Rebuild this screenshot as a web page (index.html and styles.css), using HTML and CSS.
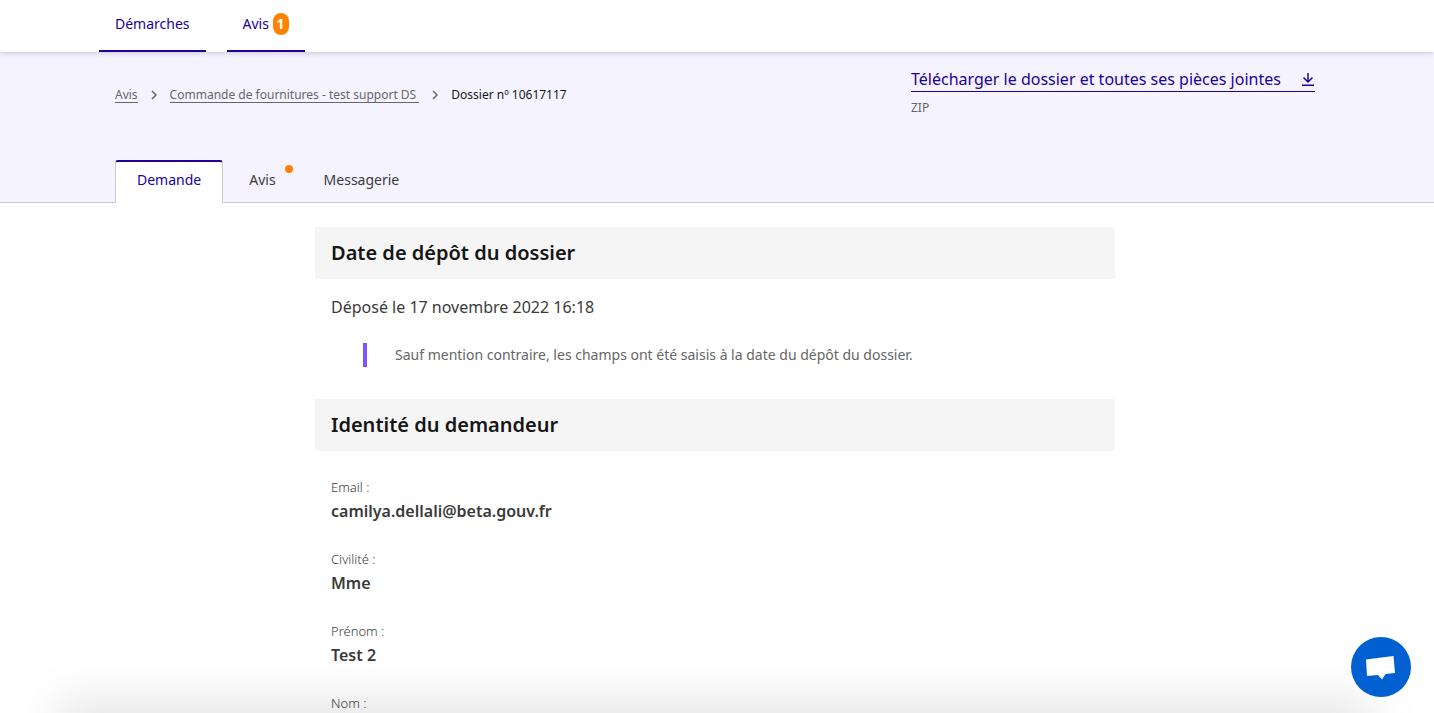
FILE: index.html
```html
<!DOCTYPE html>
<html lang="fr">
<head>
<meta charset="utf-8">
<meta name="viewport" content="width=device-width, initial-scale=1">
<title>Dossier nº 10617117</title>
<link rel="stylesheet" href="styles.css">
</head>
<body>
<header class="site-header">
  <nav class="container main-nav" aria-label="Menu principal">
    <a class="nav-link" href="#">Démarches</a>
    <a class="nav-link" href="#">Avis <span class="badge">1</span></a>
  </nav>
</header>

<div class="sub-header">
  <div class="container">
    <div class="sub-header-top">
      <nav aria-label="Fil d’Ariane">
        <ol class="breadcrumb">
          <li><a class="crumb-link" href="#">Avis</a></li>
          <li>
            <svg class="chevron" viewBox="0 0 16 16" aria-hidden="true"><path d="M6 4l4 4-4 4"/></svg>
            <a class="crumb-link" href="#">Commande de fournitures - test support DS&nbsp;</a>
          </li>
          <li>
            <svg class="chevron" viewBox="0 0 16 16" aria-hidden="true"><path d="M6 4l4 4-4 4"/></svg>
            <span class="crumb-current">Dossier nº 10617117</span>
          </li>
        </ol>
      </nav>
      <div class="download">
        <a class="download-link" href="#">Télécharger le dossier et toutes ses pièces jointes
          <svg class="download-icon" viewBox="0 0 16 16" aria-hidden="true"><path d="M9 1v9M4.500 5.500L9 10l4.500-4.500M3 13.250h12"/></svg>
        </a>
        <p class="download-detail">ZIP</p>
      </div>
    </div>
    <nav class="tabs" aria-label="Sections du dossier">
      <a class="tab tab-active" href="#" aria-current="page">Demande</a>
      <a class="tab" href="#">Avis<span class="tab-dot"></span></a>
      <a class="tab" href="#">Messagerie</a>
    </nav>
  </div>
</div>

<main class="dossier">
  <section>
    <h2 class="section-title">Date de dépôt du dossier</h2>
    <p class="deposit-date">Déposé le 17 novembre 2022 16:18</p>
    <p class="notice">Sauf mention contraire, les champs ont été saisis à la date du dépôt du dossier.</p>
  </section>
  <section>
    <h2 class="section-title">Identité du demandeur</h2>
    <dl class="fields">
      <div class="field"><dt>Email :</dt><dd>camilya.dellali@beta.gouv.fr</dd></div>
      <div class="field"><dt>Civilité :</dt><dd>Mme</dd></div>
      <div class="field"><dt>Prénom :</dt><dd>Test 2</dd></div>
      <div class="field"><dt>Nom :</dt></div>
    </dl>
  </section>
</main>

<div class="bottom-shade"></div>
<button class="chat-button" type="button" aria-label="Ouvrir la messagerie">
  <svg class="chat-icon" viewBox="0 0 60 60" aria-hidden="true"><path d="M15 22.500L42.500 19l1.500 17-9.500 1L31 42.500 27 38l-11 1z"/></svg>
</button>
</body>
</html>
```
FILE: styles.css
```css
* {
  box-sizing: border-box;
}

body {
  --blue: #21009a;
  --grey: #3a3a3a;
  --mention: #666;
  --orange: #ff8200;
  display: flex;
  flex-direction: column;
  height: 100vh;
  margin: 0;
  overflow: hidden;
  background: #fff;
  color: var(--grey);
  font-family: "Noto Sans", "Open Sans", sans-serif;
  font-size: 16px;
  line-height: 24px;
}

p, h2, dl, dd, ol {
  margin: 0;
  padding: 0;
}

a {
  color: inherit;
  text-decoration: none;
}

.container {
  width: 100%;
  max-width: 1200px;
  margin: 0 auto;
}

.site-header {
  position: relative;
  flex: none;
  padding-right: 4px;
  background: #fff;
  box-shadow: 0 1px 5px rgba(0, 0, 18, 0.2);
}

.main-nav {
  display: flex;
  gap: 21px;
}

.nav-link {
  padding: 12px 16px 14px;
  border-bottom: 2px solid var(--blue);
  color: var(--blue);
  font-size: 14px;
}

.nav-link:first-child {
  margin-left: -16px;
}

.badge {
  display: inline-block;
  padding: 0 4px;
  border-radius: 8px;
  background: var(--orange);
  color: #fff;
  font-weight: 700;
  line-height: 22px;
}

.sub-header {
  flex: none;
  padding-right: 4px;
  border-bottom: 1px solid #ccc;
  background: #f5f3ff;
}

.sub-header-top {
  display: flex;
  justify-content: space-between;
  height: 108px;
  padding-top: 16px;
}

.breadcrumb {
  display: flex;
  padding-top: 15px;
  list-style: none;
  font-size: 12px;
}

.breadcrumb li {
  display: flex;
  align-items: center;
}

.crumb-link {
  border-bottom: 1px solid var(--mention);
  color: var(--mention);
  line-height: 15px;
}

.crumb-current {
  color: #161616;
}

.chevron {
  width: 16px;
  height: 16px;
  margin: 0 8px;
  fill: none;
  stroke: var(--mention);
  stroke-width: 1.5;
}

.download {
  min-width: 404px;
}

.download-link {
  display: flex;
  align-items: center;
  justify-content: space-between;
  border-bottom: 1px solid var(--blue);
  color: var(--blue);
  line-height: 23px;
}

.download-icon {
  width: 16px;
  height: 16px;
  fill: none;
  stroke: var(--blue);
  stroke-width: 1.5;
}

.download-detail {
  padding-top: 4px;
  color: var(--mention);
  font-size: 12px;
}

.tabs {
  display: flex;
  gap: 4px;
  margin-bottom: -1px;
}

.tab {
  position: relative;
  padding: 6px 21px 11px;
  border: 1px solid transparent;
  border-top-width: 2px;
  border-bottom: 0;
  font-size: 14px;
}

.tab-active {
  border-color: var(--blue) #ccc transparent;
  border-radius: 3px 3px 0 0;
  background: #fff;
  color: var(--blue);
}

.tab-dot {
  position: absolute;
  top: 3px;
  right: 4px;
  width: 8px;
  height: 8px;
  border-radius: 50%;
  background: var(--orange);
}

.dossier {
  flex: 1;
  min-height: 0;
  padding: 24px 4px 0 0;
}

.dossier section {
  max-width: 800px;
  margin: 0 auto;
}

.section-title {
  padding: 14px 16px;
  background: #f5f5f5;
  color: #161616;
  font-size: 20px;
  font-weight: 600;
  line-height: 24px;
}

.deposit-date {
  padding: 16px 16px 0;
}

.notice {
  margin: 24px 48px 32px;
  padding-left: 28px;
  border-left: 4px solid #7c53fc;
  color: var(--mention);
  font-size: 14px;
}

.fields {
  padding: 24px 16px 0;
}

.field {
  margin-bottom: 24px;
}

.field dt {
  font-size: 13px;
  font-weight: 300;
}

.field dd {
  font-weight: 600;
}

.bottom-shade {
  position: fixed;
  right: 64px;
  bottom: -20px;
  left: 60px;
  height: 20px;
  box-shadow: 0 0 50px rgba(0, 0, 0, 0.25);
}

.chat-button {
  position: fixed;
  right: 23px;
  bottom: 16px;
  width: 60px;
  height: 60px;
  padding: 0;
  border: 0;
  border-radius: 50%;
  background: #0060d1;
}

.chat-icon {
  display: block;
  width: 60px;
  height: 60px;
  fill: #fff;
}
```
